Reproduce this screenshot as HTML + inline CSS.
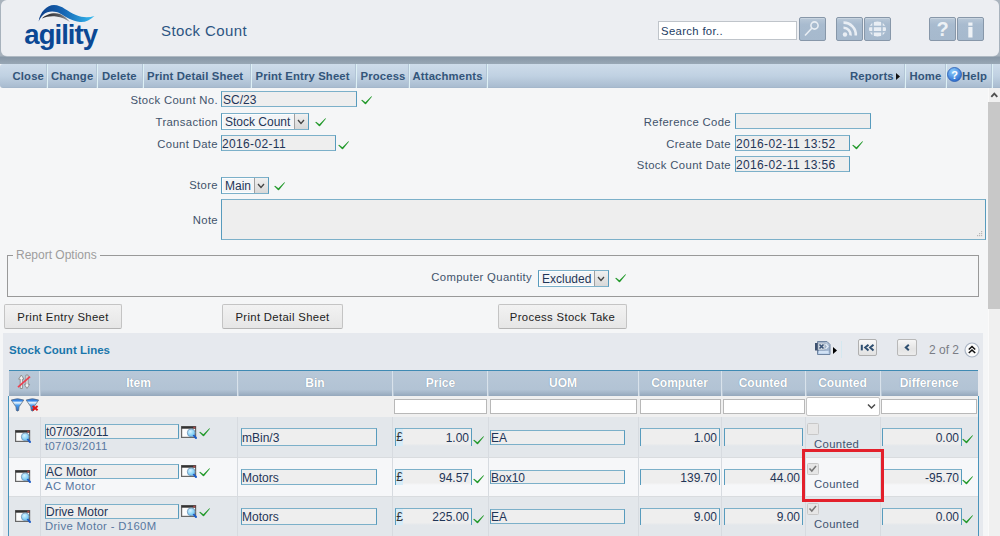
<!DOCTYPE html>
<html><head><meta charset="utf-8">
<style>
*{box-sizing:border-box;margin:0;padding:0}
html,body{width:1000px;height:536px;overflow:hidden;background:#f5f6f7;font-family:"Liberation Sans",sans-serif;font-size:12px;color:#3d5068}
.a{position:absolute}
.t{position:absolute;white-space:nowrap;line-height:14px}
#top{left:0;top:0;width:1000px;height:64px;background:linear-gradient(#aab4be 0,#a6b1bc 56px,#8797a6 57px,#8e9dac 60px,#98a7b5 64px)}
#hp{left:1px;top:0;width:998px;height:56px;background:#eceef2;border-radius:6px;box-shadow:0 0.5px 0 #c7ced6}
#tb{left:0;top:64px;width:1000px;height:24px;background:linear-gradient(#cedcea,#c0d1e2 50%,#a9bcd0 96%,#9fb2c6);border-radius:3px 0 0 3px}
.mi{position:absolute;top:64px;height:24px;line-height:24px;font-weight:bold;color:#33557a;font-size:11.3px;letter-spacing:0.15px;white-space:nowrap}
.sep{position:absolute;top:64px;width:2px;height:24px;background:linear-gradient(90deg,#b3c5d6 50%,#ddf0f5 50%)}
.hbtn{position:absolute;top:17px;width:27px;height:24px;border-radius:2px;background:linear-gradient(#b9c8d8,#a8bbcf 30%,#a6b9cd);border:1px solid #8797a9;box-shadow:inset 0 1px 0 #c8d4e0}
.lbl{position:absolute;white-space:nowrap;color:#41536b;font-size:11.3px;letter-spacing:0.35px;line-height:16px;text-align:right}
.inp{position:absolute;height:16px;border:1px solid #7cb0c9;border-left-color:#579bbd;border-right-color:#579bbd;background:#eeeeee;color:#1f3557;font-size:12px;line-height:16px;padding-left:1px;white-space:nowrap;overflow:hidden}
.chk{position:absolute;width:12px;height:10px}
.btn{position:absolute;top:304px;height:25px;border:1px solid #c4c4c4;border-bottom-color:#b4b4b4;border-radius:2px;background:linear-gradient(#f2f2f2,#e6e6e6);color:#222;font-size:11.3px;letter-spacing:0.35px;line-height:25px;text-align:center;white-space:nowrap}
.th{position:absolute;top:371px;height:25px;line-height:25px;text-align:center;color:#fff;font-weight:bold;font-size:12px;text-shadow:0 0 1px #6f849a}
.vs{position:absolute;width:2px;background:linear-gradient(90deg,#e9f0f6,#a7b9cb)}
.fi{position:absolute;top:399px;height:15px;background:#fff;border:1px solid #b8b8b8}
.row{position:absolute;left:9px;width:969px;height:40px}
.cs{position:absolute;width:1px;background:#d7dbe0}
.ci{position:absolute;height:17px;border-top:1px solid #7cb0c9;border-left:1px solid #579bbd;border-right:1px solid #579bbd;background:linear-gradient(#eeeeee,#eeeeee 85%,rgba(238,238,238,0));color:#1f3557;font-size:12px;line-height:18px;text-align:right;padding-right:2px;white-space:nowrap}
.sub{position:absolute;color:#5877a0;font-size:11.3px;letter-spacing:0.35px;line-height:14px;white-space:nowrap}
</style></head>
<body>
<div id="top" class="a"></div>
<div id="hp" class="a"></div>

<!-- logo -->
<svg class="a" style="left:0;top:0" width="110" height="56" viewBox="0 0 110 56">
  <defs>
    <linearGradient id="wg" x1="38" x2="95" y1="0" y2="0" gradientUnits="userSpaceOnUse">
      <stop offset="0" stop-color="#0d3c86"/>
      <stop offset="0.45" stop-color="#1666b4"/>
      <stop offset="1" stop-color="#36bdf2"/>
    </linearGradient>
    <linearGradient id="gg" x1="42" x2="70" y1="0" y2="0" gradientUnits="userSpaceOnUse">
      <stop offset="0" stop-color="#1e1e22"/>
      <stop offset="0.6" stop-color="#55585e"/>
      <stop offset="1" stop-color="#a0a4aa"/>
    </linearGradient>
  </defs>
  <path d="M38.6 21.5 C40 12 47 5 54 5 C62 5 68 12 76 15 C82 17.5 88 18 94.5 16 C90 20 85 22.5 80 22 C72 21 66 17 60 13.5 C55 11 48 10.5 43 15 C41 17 39.5 19.5 38.6 21.5 Z" fill="url(#wg)"/>
  <path d="M42 18.5 C46 14 54 12 60 14 C64 15.5 67 18.5 70 22 C66 19.5 62 17 56 16.5 C50 16 46 17 42 18.5 Z" fill="url(#gg)"/>
  <text x="24.3" y="44" font-family="Liberation Sans" font-weight="bold" font-size="27.5" fill="#0b4894" letter-spacing="-0.95">agility</text>
</svg>

<div class="t" style="left:161px;top:22px;font-size:15px;line-height:17px;letter-spacing:0.4px;color:#2c5582">Stock Count</div>

<!-- search -->
<div class="a" style="left:658px;top:21px;width:139px;height:19px;background:#fff;border:1px solid #bfc4ca"></div>
<div class="t" style="left:661px;top:23.5px;color:#1d3c63;font-size:11.3px;letter-spacing:0.35px">Search for..</div>
<div class="hbtn" style="left:799px"></div>
<svg class="a" style="left:799px;top:17px" width="27" height="24" viewBox="0 0 27 24"><circle cx="15.5" cy="8.5" r="3.6" fill="none" stroke="#e9eef4" stroke-width="1.6"/><line x1="12.8" y1="11.2" x2="6" y2="18.5" stroke="#e9eef4" stroke-width="1.6"/></svg>
<div class="hbtn" style="left:836px"></div>
<svg class="a" style="left:836px;top:17px" width="27" height="24" viewBox="0 0 27 24"><circle cx="9" cy="17.5" r="2.2" fill="#e9eef4"/><path d="M7.5 10.8 A7 7 0 0 1 14.6 18.5" fill="none" stroke="#e9eef4" stroke-width="2.6"/><path d="M7.5 5.6 A12.2 12.2 0 0 1 19.8 18.5" fill="none" stroke="#e9eef4" stroke-width="2.6"/></svg>
<div class="hbtn" style="left:864px"></div>
<svg class="a" style="left:864px;top:17px" width="27" height="24" viewBox="0 0 27 24"><ellipse cx="13.5" cy="12" rx="8.6" ry="7.5" fill="#e9eef4"/><rect x="4" y="8.7" width="19" height="1.5" fill="#a9bcd0"/><rect x="4" y="14" width="19" height="1.5" fill="#a9bcd0"/><rect x="8.3" y="4" width="1.5" height="16" fill="#a9bcd0"/><rect x="17.2" y="4" width="1.5" height="16" fill="#a9bcd0"/></svg>
<div class="hbtn" style="left:929px"></div>
<div class="t" style="left:929px;top:18px;width:27px;text-align:center;font-size:20px;line-height:22px;font-weight:bold;color:#edf1f5">?</div>
<div class="hbtn" style="left:957px"></div>
<svg class="a" style="left:957px;top:17px" width="27" height="24" viewBox="0 0 27 24"><rect x="11.3" y="5.5" width="4.2" height="3.2" fill="#eef2f6"/><rect x="11.3" y="10" width="4.2" height="10.5" fill="#eef2f6"/></svg>

<!-- toolbar -->
<div id="tb" class="a"></div>
<div class="mi" style="left:12.5px">Close</div>
<div class="sep" style="left:46px"></div>
<div class="mi" style="left:51px">Change</div>
<div class="sep" style="left:96px"></div>
<div class="mi" style="left:102px">Delete</div>
<div class="sep" style="left:142px"></div>
<div class="mi" style="left:147px">Print Detail Sheet</div>
<div class="sep" style="left:250px"></div>
<div class="mi" style="left:255.5px">Print Entry Sheet</div>
<div class="sep" style="left:355px"></div>
<div class="mi" style="left:360.5px">Process</div>
<div class="sep" style="left:408px"></div>
<div class="mi" style="left:412.5px">Attachments</div>
<div class="sep" style="left:486px"></div>
<div class="mi" style="left:850px">Reports</div>
<svg class="a" style="left:896px;top:73px" width="4" height="7"><path d="M0 0 L4 3.5 L0 7Z" fill="#111"/></svg>
<div class="sep" style="left:904px"></div>
<div class="mi" style="left:909.5px">Home</div>
<div class="sep" style="left:945px"></div>
<svg class="a" style="left:947px;top:67px" width="15" height="15" viewBox="0 0 15 15"><defs><radialGradient id="hg" cx="0.4" cy="0.3" r="0.8"><stop offset="0" stop-color="#8fd0ff"/><stop offset="1" stop-color="#1f5fc8"/></radialGradient></defs><circle cx="7.5" cy="7.5" r="7" fill="url(#hg)" stroke="#2a5cb0" stroke-width="0.8"/><text x="7.5" y="11.5" text-anchor="middle" font-family="Liberation Sans" font-weight="bold" font-size="11" fill="#fff">?</text></svg>
<div class="mi" style="left:962px">Help</div>
<div class="sep" style="left:991px"></div>

<!-- scrollbar -->
<div class="a" style="left:988px;top:88px;width:12px;height:448px;background:#f0f0f0;border-left:1px solid #fafafa"></div>
<div class="a" style="left:988px;top:102px;width:12px;height:207px;background:#c8c8c8"></div>
<svg class="a" style="left:989px;top:91px" width="10" height="8"><path d="M2.3 5.8 L5.3 2.7 L8.3 5.8" fill="none" stroke="#505050" stroke-width="1.9"/></svg>

<!-- form -->
<div class="lbl" style="left:100px;width:118px;top:92px">Stock Count No.</div>
<div class="inp" style="left:221px;top:91px;width:136px">SC/23</div>
<svg class="chk" style="left:361px;top:95.5px" viewBox="0 0 12 10"><path d="M0.2 4.3 Q1 3.4 1.8 4.2 L4.4 6.3 L10.4 0.3 Q10.9 0.1 10.9 0.8 L5.3 7.8 Q4.6 8.6 3.9 7.9 Z" fill="#22992a"/></svg>

<div class="lbl" style="left:100px;width:118px;top:114px">Transaction</div>
<div class="inp" style="left:221px;top:113px;width:88px;height:17px;background:#f3f5f7;padding-left:3px;box-shadow:inset 0 0 0 1px #fdfdfd">Stock Count</div>
<div class="a" style="left:294px;top:114px;width:14px;height:15px;background:linear-gradient(#f0f0f0,#d8d8d8);border-left:1px solid #a0a0a0"></div>
<svg class="a" style="left:297px;top:119px" width="8" height="6"><path d="M1 1 L4 4.5 L7 1" fill="none" stroke="#444" stroke-width="1.3"/></svg>
<svg class="chk" style="left:315px;top:118px" viewBox="0 0 12 10"><path d="M0.2 4.3 Q1 3.4 1.8 4.2 L4.4 6.3 L10.4 0.3 Q10.9 0.1 10.9 0.8 L5.3 7.8 Q4.6 8.6 3.9 7.9 Z" fill="#22992a"/></svg>

<div class="lbl" style="left:100px;width:118px;top:136px">Count Date</div>
<div class="inp" style="left:221px;top:135px;width:115px;padding-left:0;letter-spacing:0.35px">2016-02-11</div>
<svg class="chk" style="left:338px;top:141px" viewBox="0 0 12 10"><path d="M0.2 4.3 Q1 3.4 1.8 4.2 L4.4 6.3 L10.4 0.3 Q10.9 0.1 10.9 0.8 L5.3 7.8 Q4.6 8.6 3.9 7.9 Z" fill="#22992a"/></svg>

<div class="lbl" style="left:100px;width:118px;top:176.5px">Store</div>
<div class="inp" style="left:221px;top:177px;width:48px;height:17px;background:#f3f5f7;padding-left:3px;box-shadow:inset 0 0 0 1px #fdfdfd">Main</div>
<div class="a" style="left:254px;top:178px;width:14px;height:15px;background:linear-gradient(#f0f0f0,#d8d8d8);border-left:1px solid #a0a0a0"></div>
<svg class="a" style="left:257px;top:183px" width="8" height="6"><path d="M1 1 L4 4.5 L7 1" fill="none" stroke="#444" stroke-width="1.3"/></svg>
<svg class="chk" style="left:274px;top:182px" viewBox="0 0 12 10"><path d="M0.2 4.3 Q1 3.4 1.8 4.2 L4.4 6.3 L10.4 0.3 Q10.9 0.1 10.9 0.8 L5.3 7.8 Q4.6 8.6 3.9 7.9 Z" fill="#22992a"/></svg>

<div class="lbl" style="left:100px;width:118px;top:212px">Note</div>
<div class="inp" style="left:221px;top:199px;width:765px;height:41px"></div>
<svg class="a" style="left:976px;top:230px" width="8" height="8"><g fill="#b8b8b8"><rect x="5" y="1" width="1.2" height="1.2"/><rect x="3" y="3" width="1.2" height="1.2"/><rect x="5" y="3" width="1.2" height="1.2"/><rect x="1" y="5" width="1.2" height="1.2"/><rect x="3" y="5" width="1.2" height="1.2"/><rect x="5" y="5" width="1.2" height="1.2"/></g></svg>

<div class="lbl" style="left:600px;width:131px;top:114px">Reference Code</div>
<div class="inp" style="left:735px;top:113px;width:136px">&nbsp;</div>
<div class="lbl" style="left:600px;width:131px;top:136px">Create Date</div>
<div class="inp" style="left:735px;top:135px;width:115px;padding-left:0;letter-spacing:0.35px">2016-02-11 13:52</div>
<svg class="chk" style="left:852px;top:141px" viewBox="0 0 12 10"><path d="M0.2 4.3 Q1 3.4 1.8 4.2 L4.4 6.3 L10.4 0.3 Q10.9 0.1 10.9 0.8 L5.3 7.8 Q4.6 8.6 3.9 7.9 Z" fill="#22992a"/></svg>
<div class="lbl" style="left:600px;width:131px;top:157px">Stock Count Date</div>
<div class="inp" style="left:735px;top:156px;width:115px;padding-left:0;letter-spacing:0.35px">2016-02-11 13:56</div>

<!-- report options fieldset -->
<div class="a" style="left:7px;top:255px;width:972px;height:42px;border:1px solid #999"></div>
<div class="t" style="left:13px;top:248px;padding:0 3px;background:#f5f6f7;color:#9d9d9d">Report Options</div>
<div class="lbl" style="left:398px;width:134px;top:269px">Computer Quantity</div>
<div class="inp" style="left:538px;top:270px;width:71px;height:17px;background:#f3f5f7;padding-left:3px;box-shadow:inset 0 0 0 1px #fdfdfd">Excluded</div>
<div class="a" style="left:594px;top:271px;width:14px;height:15px;background:linear-gradient(#f0f0f0,#d8d8d8);border-left:1px solid #a0a0a0"></div>
<svg class="a" style="left:597px;top:276px" width="8" height="6"><path d="M1 1 L4 4.5 L7 1" fill="none" stroke="#444" stroke-width="1.3"/></svg>
<svg class="chk" style="left:614.5px;top:274px" viewBox="0 0 12 10"><path d="M0.2 4.3 Q1 3.4 1.8 4.2 L4.4 6.3 L10.4 0.3 Q10.9 0.1 10.9 0.8 L5.3 7.8 Q4.6 8.6 3.9 7.9 Z" fill="#22992a"/></svg>

<div class="btn" style="left:4px;width:118px">Print Entry Sheet</div>
<div class="btn" style="left:222px;width:121px">Print Detail Sheet</div>
<div class="btn" style="left:498px;width:129px">Process Stock Take</div>

<!-- lines panel -->
<div class="a" style="left:3px;top:333px;width:980px;height:203px;background:#e6e9ee"></div>
<div class="t" style="left:9px;top:342.5px;font-weight:bold;font-size:11.5px;color:#1a76ab">Stock Count Lines</div>


<!-- pager -->
<svg class="a" style="left:814px;top:340px" width="17" height="16" viewBox="0 0 17 16"><defs><linearGradient id="xg" x1="0" y1="0" x2="0" y2="1"><stop offset="0" stop-color="#b8c6d8"/><stop offset="0.6" stop-color="#9eb2cc"/><stop offset="1" stop-color="#b8d0ee"/></linearGradient></defs><path d="M3.5 1.5 L13 1.5 L16 4.5 L16 14.5 L3.5 14.5 Z" fill="url(#xg)" stroke="#6f84a0" stroke-width="1"/><rect x="1" y="3" width="4" height="7.5" fill="#3e5270"/><rect x="4" y="3" width="7" height="7" fill="#d8dee6" stroke="#8b9ab0" stroke-width="0.6"/><path d="M5.5 4.5 L9.5 8.5 M9.5 4.5 L5.5 8.5" stroke="#3a5478" stroke-width="1.6"/><path d="M11.5 4 L14 6.5 L11.5 9" fill="none" stroke="#e4ecf6" stroke-width="1.2"/><rect x="5" y="11" width="9.5" height="2.5" fill="#d2e2f4"/></svg>
<svg class="a" style="left:833px;top:347px" width="4" height="7"><path d="M0 0 L4 3.5 L0 7Z" fill="#000"/></svg>
<div class="a" style="left:841px;top:341px;width:1px;height:17px;background:#d4e8f0"></div>
<div class="a" style="left:858px;top:339px;width:19px;height:17px;border:1px solid #b0b0b0;border-radius:2px;background:linear-gradient(#f8f8f8,#e2e2e2)"></div>
<svg class="a" style="left:858px;top:339px" width="19" height="17" viewBox="0 0 19 17"><rect x="2.8" y="5.8" width="2" height="5.6" fill="#2f4f70"/><path d="M10.5 5.8 L7.2 8.6 L10.5 11.4 M15.5 5.8 L12.2 8.6 L15.5 11.4" fill="none" stroke="#2f4f70" stroke-width="2"/></svg>
<div class="a" style="left:897px;top:339px;width:20px;height:17px;border:1px solid #b8b8b8;border-radius:2px;background:linear-gradient(#f6f6f6,#e4e4e4 60%,#ececec)"></div>
<svg class="a" style="left:897px;top:339px" width="20" height="17" viewBox="0 0 20 17"><path d="M11.8 5.8 L8.8 8.5 L11.8 11.2" fill="none" stroke="#2f4f70" stroke-width="2"/></svg>
<div class="t" style="left:929px;top:343px;color:#7a7d86;font-size:12px">2 of 2</div>
<svg class="a" style="left:964px;top:342px" width="16" height="16" viewBox="0 0 16 16"><circle cx="8" cy="8" r="7" fill="#fafafa" stroke="#a9b4c4" stroke-width="1.2"/><path d="M4.8 7.5 L8 4.5 L11.2 7.5 M4.8 11 L8 8 L11.2 11" fill="none" stroke="#111" stroke-width="1.6"/></svg>

<!-- table header -->
<div class="a" style="left:9px;top:370px;width:969px;height:1px;background:#3f8ab3"></div>
<div class="a" style="left:9px;top:371px;width:969px;height:25px;background:linear-gradient(#b8c8d8,#b2c3d4 75%,#a3b5c8 88%,#95a8bc)"></div>
<div class="vs" style="left:39px;top:371px;height:25px"></div>
<div class="vs" style="left:237px;top:371px;height:25px"></div>
<div class="vs" style="left:392px;top:371px;height:25px"></div>
<div class="vs" style="left:487px;top:371px;height:25px"></div>
<div class="vs" style="left:638px;top:371px;height:25px"></div>
<div class="vs" style="left:721px;top:371px;height:25px"></div>
<div class="vs" style="left:805px;top:371px;height:25px"></div>
<div class="vs" style="left:880px;top:371px;height:25px"></div>
<svg class="a" style="left:17px;top:374px" width="14" height="16" viewBox="0 0 14 16"><path d="M4.3 1 L7 5.2 L5.4 5.2 L5.4 14.5 L3.2 14.5 L3.2 5.2 L1.6 5.2 Z" fill="#f4f4f4" stroke="#8a8a8a" stroke-width="0.9"/><path d="M10 14.5 L12.7 10.3 L11.1 10.3 L11.1 1 L8.9 1 L8.9 10.3 L7.3 10.3 Z" fill="#f4f4f4" stroke="#8a8a8a" stroke-width="0.9"/><path d="M1 13.2 L13 2.6" stroke="#ec4050" stroke-width="1.8"/></svg>
<div class="th" style="left:40px;width:197px">Item</div>
<div class="th" style="left:237px;width:156px">Bin</div>
<div class="th" style="left:393px;width:95px">Price</div>
<div class="th" style="left:488px;width:150px">UOM</div>
<div class="th" style="left:638px;width:83px">Computer</div>
<div class="th" style="left:721px;width:84px">Counted</div>
<div class="th" style="left:805px;width:75px">Counted</div>
<div class="th" style="left:880px;width:98px">Difference</div>

<!-- filter row -->
<div class="a" style="left:8px;top:396px;width:971px;height:140px;border-left:1px solid #4a94bb;border-right:1px solid #4a94bb"></div>
<div class="a" style="left:9px;top:396px;width:969px;height:21px;background:#f0f0f0"></div>
<svg class="a" style="left:10px;top:398px" width="30" height="15" viewBox="0 0 30 15"><defs><linearGradient id="fg" x1="0" x2="0" y1="0" y2="1"><stop offset="0" stop-color="#2a76dc"/><stop offset="0.2" stop-color="#3d8ce8"/><stop offset="0.27" stop-color="#e8f5ff"/><stop offset="0.4" stop-color="#b6daf8"/><stop offset="0.52" stop-color="#4c9ff0"/><stop offset="1" stop-color="#2a66b8"/></linearGradient></defs><path d="M1.2 2 Q7.5 -0.6 13.8 2 L9.1 8.8 L8.7 12.4 Q7.5 13.8 6.3 12.4 L5.9 8.8 Z" fill="url(#fg)" stroke="#5c6878" stroke-width="0.7"/><g transform="translate(14.9 0)"><path d="M1.2 2 Q7.5 -0.6 13.8 2 L9.1 8.8 L8.7 12.4 Q7.5 13.8 6.3 12.4 L5.9 8.8 Z" fill="url(#fg)" stroke="#5c6878" stroke-width="0.7"/></g><path d="M22.6 8 L27.6 12.2 M27.6 8 L22.6 12.2" stroke="#e01818" stroke-width="2"/></svg>
<div class="fi" style="left:394px;width:93px"></div>
<div class="fi" style="left:490px;width:147px"></div>
<div class="fi" style="left:640px;width:81px"></div>
<div class="fi" style="left:723px;width:82px"></div>
<div class="a" style="left:806px;top:397px;width:74px;height:19px;background:#fff;border:1px solid #c4c4c4;border-radius:2px"></div>
<svg class="a" style="left:867px;top:403px" width="9" height="7"><path d="M1 1.5 L4.5 5 L8 1.5" fill="none" stroke="#4a4a4a" stroke-width="1.5"/></svg>
<div class="fi" style="left:881px;width:96px"></div>

<!-- rows -->
<svg width="0" height="0" style="position:absolute"><defs><radialGradient id="lg" cx="0.4" cy="0.35" r="0.7"><stop offset="0" stop-color="#d6f2ff"/><stop offset="1" stop-color="#5cc0f2"/></radialGradient></defs></svg>
<div class="a" style="left:9px;top:417px;width:969px;height:40px;background:#e3e7eb;"></div>
<div class="cs" style="left:40px;top:417px;height:40px"></div>
<div class="cs" style="left:237px;top:417px;height:40px"></div>
<div class="cs" style="left:392px;top:417px;height:40px"></div>
<div class="cs" style="left:487.5px;top:417px;height:40px"></div>
<div class="cs" style="left:638px;top:417px;height:40px"></div>
<div class="cs" style="left:721px;top:417px;height:40px"></div>
<div class="cs" style="left:805px;top:417px;height:40px"></div>
<div class="cs" style="left:880px;top:417px;height:40px"></div>
<svg class="a" style="left:14.5px;top:430.0px" width="17" height="15" viewBox="0 0 17 15"><rect x="0.6" y="0.6" width="14" height="10.8" fill="#fdfdfd" stroke="#686868" stroke-width="1.2"/><rect x="0.5" y="0.5" width="14.2" height="2.2" fill="#333"/><rect x="12.3" y="0.8" width="2" height="1.6" fill="#b04848"/><circle cx="10.2" cy="6.8" r="3.9" fill="url(#lg)" stroke="#7392b4" stroke-width="0.8"/><path d="M12.9 9.7 L15 12" stroke="#1c5cc8" stroke-width="2" stroke-linecap="round"/></svg>
<div class="inp" style="left:45px;top:424px;width:134px;height:15px;line-height:15px;padding-left:0">t07/03/2011</div>
<svg class="a" style="left:181.0px;top:426.0px" width="17" height="15" viewBox="0 0 17 15"><rect x="0.6" y="0.6" width="14" height="10.8" fill="#fdfdfd" stroke="#686868" stroke-width="1.2"/><rect x="0.5" y="0.5" width="14.2" height="2.2" fill="#333"/><rect x="12.3" y="0.8" width="2" height="1.6" fill="#b04848"/><circle cx="10.2" cy="6.8" r="3.9" fill="url(#lg)" stroke="#7392b4" stroke-width="0.8"/><path d="M12.9 9.7 L15 12" stroke="#1c5cc8" stroke-width="2" stroke-linecap="round"/></svg>
<svg class="chk" style="left:198.7px;top:427.5px" viewBox="0 0 12 10"><path d="M0.2 4.3 Q1 3.4 1.8 4.2 L4.4 6.3 L10.4 0.3 Q10.9 0.1 10.9 0.8 L5.3 7.8 Q4.6 8.6 3.9 7.9 Z" fill="#22992a"/></svg>
<div class="sub" style="left:45px;top:439px">t07/03/2011</div>
<div class="inp" style="left:241px;top:428px;width:136px;height:18px;line-height:18px;padding-left:0">mBin/3</div>
<div class="ci" style="left:395px;top:428px;width:77px;height:18px;line-height:18px">1.00</div>
<div class="a" style="left:396px;top:429px;width:7px;height:17px;background:#d6ecf8;color:#333;font-size:12px;line-height:17px;text-align:center">&pound;</div>
<svg class="chk" style="left:473.0px;top:435.5px" viewBox="0 0 12 10"><path d="M0.2 4.3 Q1 3.4 1.8 4.2 L4.4 6.3 L10.4 0.3 Q10.9 0.1 10.9 0.8 L5.3 7.8 Q4.6 8.6 3.9 7.9 Z" fill="#22992a"/></svg>
<div class="inp" style="left:490px;top:430px;width:135px;height:15px;line-height:15px;padding-left:0">EA</div>
<div class="ci" style="left:640px;top:428px;width:80px;height:18px;line-height:18px">1.00</div>
<div class="ci" style="left:724px;top:428px;width:79px;height:18px;line-height:18px"></div>
<svg class="a" style="left:807px;top:423px" width="12" height="12" viewBox="0 0 12 12"><rect x="0.5" y="0.5" width="11" height="11" rx="1" fill="#e6e6e6" stroke="#c8c8c8"/></svg>
<div class="sub" style="left:814px;top:437px;color:#3f5470">Counted</div>
<div class="ci" style="left:882px;top:428px;width:80px;height:18px;line-height:18px">0.00</div>
<svg class="chk" style="left:962.0px;top:435.0px" viewBox="0 0 12 10"><path d="M0.2 4.3 Q1 3.4 1.8 4.2 L4.4 6.3 L10.4 0.3 Q10.9 0.1 10.9 0.8 L5.3 7.8 Q4.6 8.6 3.9 7.9 Z" fill="#22992a"/></svg>
<div class="a" style="left:9px;top:457px;width:969px;height:39px;background:#f6f7f9;border-top:1px solid #d9dcdf;"></div>
<div class="cs" style="left:40px;top:457px;height:39px"></div>
<div class="cs" style="left:237px;top:457px;height:39px"></div>
<div class="cs" style="left:392px;top:457px;height:39px"></div>
<div class="cs" style="left:487.5px;top:457px;height:39px"></div>
<div class="cs" style="left:638px;top:457px;height:39px"></div>
<div class="cs" style="left:721px;top:457px;height:39px"></div>
<div class="cs" style="left:805px;top:457px;height:39px"></div>
<div class="cs" style="left:880px;top:457px;height:39px"></div>
<svg class="a" style="left:14.5px;top:470.0px" width="17" height="15" viewBox="0 0 17 15"><rect x="0.6" y="0.6" width="14" height="10.8" fill="#fdfdfd" stroke="#686868" stroke-width="1.2"/><rect x="0.5" y="0.5" width="14.2" height="2.2" fill="#333"/><rect x="12.3" y="0.8" width="2" height="1.6" fill="#b04848"/><circle cx="10.2" cy="6.8" r="3.9" fill="url(#lg)" stroke="#7392b4" stroke-width="0.8"/><path d="M12.9 9.7 L15 12" stroke="#1c5cc8" stroke-width="2" stroke-linecap="round"/></svg>
<div class="inp" style="left:45px;top:464px;width:134px;height:15px;line-height:15px;padding-left:0">AC Motor</div>
<svg class="a" style="left:181.0px;top:465.3px" width="17" height="15" viewBox="0 0 17 15"><rect x="0.6" y="0.6" width="14" height="10.8" fill="#fdfdfd" stroke="#686868" stroke-width="1.2"/><rect x="0.5" y="0.5" width="14.2" height="2.2" fill="#333"/><rect x="12.3" y="0.8" width="2" height="1.6" fill="#b04848"/><circle cx="10.2" cy="6.8" r="3.9" fill="url(#lg)" stroke="#7392b4" stroke-width="0.8"/><path d="M12.9 9.7 L15 12" stroke="#1c5cc8" stroke-width="2" stroke-linecap="round"/></svg>
<svg class="chk" style="left:198.7px;top:468.0px" viewBox="0 0 12 10"><path d="M0.2 4.3 Q1 3.4 1.8 4.2 L4.4 6.3 L10.4 0.3 Q10.9 0.1 10.9 0.8 L5.3 7.8 Q4.6 8.6 3.9 7.9 Z" fill="#22992a"/></svg>
<div class="sub" style="left:45px;top:479px">AC Motor</div>
<div class="inp" style="left:241px;top:469px;width:136px;height:16px;line-height:16px;padding-left:0">Motors</div>
<div class="ci" style="left:395px;top:469px;width:77px;height:16px;line-height:16px">94.57</div>
<div class="a" style="left:396px;top:470px;width:7px;height:15px;background:#d6ecf8;color:#333;font-size:12px;line-height:15px;text-align:center">&pound;</div>
<svg class="chk" style="left:473.0px;top:475.0px" viewBox="0 0 12 10"><path d="M0.2 4.3 Q1 3.4 1.8 4.2 L4.4 6.3 L10.4 0.3 Q10.9 0.1 10.9 0.8 L5.3 7.8 Q4.6 8.6 3.9 7.9 Z" fill="#22992a"/></svg>
<div class="inp" style="left:490px;top:470px;width:135px;height:14px;line-height:15px;padding-left:0">Box10</div>
<div class="ci" style="left:640px;top:469px;width:80px;height:16px;line-height:16px">139.70</div>
<div class="ci" style="left:724px;top:469px;width:79px;height:16px;line-height:16px">44.00</div>
<svg class="a" style="left:807px;top:463px" width="12" height="12" viewBox="0 0 12 12"><rect x="0.5" y="0.5" width="11" height="11" rx="1" fill="#e6e6e6" stroke="#c8c8c8"/><path d="M2.5 5.5 L4.8 8 L9 3" fill="none" stroke="#777" stroke-width="1.5"/></svg>
<div class="sub" style="left:814px;top:477px;color:#3f5470">Counted</div>
<div class="ci" style="left:882px;top:469px;width:80px;height:16px;line-height:16px">-95.70</div>
<svg class="chk" style="left:962.0px;top:475.5px" viewBox="0 0 12 10"><path d="M0.2 4.3 Q1 3.4 1.8 4.2 L4.4 6.3 L10.4 0.3 Q10.9 0.1 10.9 0.8 L5.3 7.8 Q4.6 8.6 3.9 7.9 Z" fill="#22992a"/></svg>
<div class="a" style="left:9px;top:496px;width:969px;height:40px;background:#e3e7eb;border-top:1px solid #d9dcdf;"></div>
<div class="cs" style="left:40px;top:496px;height:40px"></div>
<div class="cs" style="left:237px;top:496px;height:40px"></div>
<div class="cs" style="left:392px;top:496px;height:40px"></div>
<div class="cs" style="left:487.5px;top:496px;height:40px"></div>
<div class="cs" style="left:638px;top:496px;height:40px"></div>
<div class="cs" style="left:721px;top:496px;height:40px"></div>
<div class="cs" style="left:805px;top:496px;height:40px"></div>
<div class="cs" style="left:880px;top:496px;height:40px"></div>
<svg class="a" style="left:14.5px;top:510.0px" width="17" height="15" viewBox="0 0 17 15"><rect x="0.6" y="0.6" width="14" height="10.8" fill="#fdfdfd" stroke="#686868" stroke-width="1.2"/><rect x="0.5" y="0.5" width="14.2" height="2.2" fill="#333"/><rect x="12.3" y="0.8" width="2" height="1.6" fill="#b04848"/><circle cx="10.2" cy="6.8" r="3.9" fill="url(#lg)" stroke="#7392b4" stroke-width="0.8"/><path d="M12.9 9.7 L15 12" stroke="#1c5cc8" stroke-width="2" stroke-linecap="round"/></svg>
<div class="inp" style="left:45px;top:504px;width:134px;height:15px;line-height:15px;padding-left:0">Drive Motor</div>
<svg class="a" style="left:181.0px;top:505.0px" width="17" height="15" viewBox="0 0 17 15"><rect x="0.6" y="0.6" width="14" height="10.8" fill="#fdfdfd" stroke="#686868" stroke-width="1.2"/><rect x="0.5" y="0.5" width="14.2" height="2.2" fill="#333"/><rect x="12.3" y="0.8" width="2" height="1.6" fill="#b04848"/><circle cx="10.2" cy="6.8" r="3.9" fill="url(#lg)" stroke="#7392b4" stroke-width="0.8"/><path d="M12.9 9.7 L15 12" stroke="#1c5cc8" stroke-width="2" stroke-linecap="round"/></svg>
<svg class="chk" style="left:198.7px;top:508.0px" viewBox="0 0 12 10"><path d="M0.2 4.3 Q1 3.4 1.8 4.2 L4.4 6.3 L10.4 0.3 Q10.9 0.1 10.9 0.8 L5.3 7.8 Q4.6 8.6 3.9 7.9 Z" fill="#22992a"/></svg>
<div class="sub" style="left:45px;top:519px">Drive Motor - D160M</div>
<div class="inp" style="left:241px;top:508px;width:136px;height:17px;line-height:17px;padding-left:0">Motors</div>
<div class="ci" style="left:395px;top:508px;width:77px;height:17px;line-height:17px">225.00</div>
<div class="a" style="left:396px;top:509px;width:7px;height:16px;background:#d6ecf8;color:#333;font-size:12px;line-height:16px;text-align:center">&pound;</div>
<svg class="chk" style="left:473.0px;top:515.0px" viewBox="0 0 12 10"><path d="M0.2 4.3 Q1 3.4 1.8 4.2 L4.4 6.3 L10.4 0.3 Q10.9 0.1 10.9 0.8 L5.3 7.8 Q4.6 8.6 3.9 7.9 Z" fill="#22992a"/></svg>
<div class="inp" style="left:490px;top:509px;width:135px;height:15px;line-height:15px;padding-left:0">EA</div>
<div class="ci" style="left:640px;top:508px;width:80px;height:17px;line-height:17px">9.00</div>
<div class="ci" style="left:724px;top:508px;width:79px;height:17px;line-height:17px">9.00</div>
<svg class="a" style="left:807px;top:503px" width="12" height="12" viewBox="0 0 12 12"><rect x="0.5" y="0.5" width="11" height="11" rx="1" fill="#e6e6e6" stroke="#c8c8c8"/><path d="M2.5 5.5 L4.8 8 L9 3" fill="none" stroke="#777" stroke-width="1.5"/></svg>
<div class="sub" style="left:814px;top:517px;color:#3f5470">Counted</div>
<div class="ci" style="left:882px;top:508px;width:80px;height:17px;line-height:17px">0.00</div>
<svg class="chk" style="left:962.0px;top:514.5px" viewBox="0 0 12 10"><path d="M0.2 4.3 Q1 3.4 1.8 4.2 L4.4 6.3 L10.4 0.3 Q10.9 0.1 10.9 0.8 L5.3 7.8 Q4.6 8.6 3.9 7.9 Z" fill="#22992a"/></svg>
<div class="a" style="left:802px;top:449px;width:82px;height:53px;border:3px solid #e3202b"></div>
<!-- /rows -->
</body></html>
